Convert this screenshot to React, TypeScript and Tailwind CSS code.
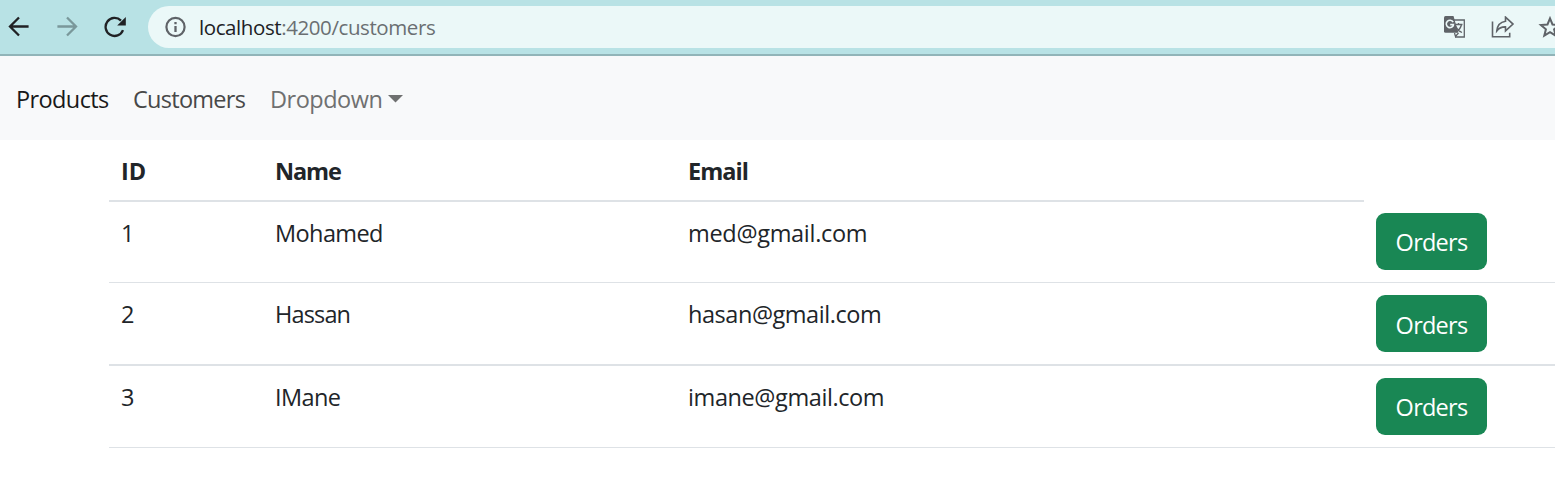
import React from "react";

type Customer = {
  id: number;
  name: string;
  email: string;
  row: string;
  cell: string;
  button: string;
  nameClass: string;
  emailClass: string;
};

const customers: Customer[] = [
  { id: 1, name: "Mohamed", email: "med@gmail.com", row: "h-[81px] border-b", cell: "pt-[11px]", button: "pt-px", nameClass: "tracking-[-0.6px]", emailClass: "tracking-[-0.3px]" },
  { id: 2, name: "Hassan", email: "hasan@gmail.com", row: "h-[83px] border-b-2", cell: "pt-3", button: "pt-[3px]", nameClass: "tracking-[-0.85px]", emailClass: "tracking-[-0.45px]" },
  { id: 3, name: "IMane", email: "imane@gmail.com", row: "h-[82px] border-b", cell: "pt-3", button: "pt-px", nameClass: "tracking-[-0.6px]", emailClass: "tracking-[-0.4px]" },
];

function BrowserBar() {
  return (
    <header className="flex h-14 items-start border-b-2 border-[#91b4b8] bg-[#b8e2e5] pt-1.5">
      <div className="flex h-[42px] w-[148px] shrink-0 items-center">
        <svg className="ml-2 h-[22px] w-[22px]" viewBox="0 0 22 22" fill="none" stroke="#202124" strokeWidth="2.3">
          <path d="M20.6 10.5H2.6M11 1.5l-9 9 9 9" />
        </svg>
        <svg className="ml-[26px] h-[22px] w-[22px]" viewBox="0 0 22 22" fill="none" stroke="#7a989b" strokeWidth="2.3">
          <path d="M1.4 10.5h18M11 1.5l9 9-9 9" />
        </svg>
        <svg className="ml-[26px] h-[22px] w-[22px]" viewBox="0 0 22 22" fill="none">
          <path d="M19 14.2A9 9 0 1 1 17 4.6" stroke="#202124" strokeWidth="2.3" />
          <path d="M21.8 1v8.6h-8.6z" fill="#202124" />
        </svg>
      </div>
      <div className="flex h-[42px] flex-1 items-center overflow-hidden rounded-l-full bg-[#ebf8f8]">
        <svg className="ml-[17px] h-[22px] w-[22px] shrink-0" viewBox="0 0 22 22" fill="none">
          <circle cx="10.5" cy="11" r="9.1" stroke="#5f6368" strokeWidth="2.2" />
          <path d="M10.5 10.1v6M10.5 6v2.2" stroke="#5f6368" strokeWidth="2.3" />
        </svg>
        <div className="ml-3 flex-1 whitespace-nowrap text-[20.5px] leading-[42px] tracking-[-0.41px] text-[#6a6f72]">
          <span className="text-[#202124]">localhost</span>:4200/customers
        </div>
        <svg className="mr-[25px] h-[22px] w-[22px] shrink-0" viewBox="0 0 22 22">
          <path d="M8 4h12.3v17H11" fill="none" stroke="#5f6368" strokeWidth="1.3" />
          <path d="M1.5 0h8l4.8 16.8H1.5Q0 16.8 0 15.3V1.5Q0 0 1.5 0z" fill="#5f6368" />
          <path d="M9.2 6.1A3.7 3.7 0 1 0 9.6 8.6H6.2" fill="none" stroke="#ebf8f8" strokeWidth="1.6" />
          <path d="M10.5 8.5h8M14.5 7v1.5M17.5 8.5q-1 5-5.5 7.5M12 10.5q1.5 4 6 6M10.5 17l1 3.5 3-3.5" fill="none" stroke="#5f6368" strokeWidth="1.3" />
        </svg>
        <svg className="mr-[23px] h-[22px] w-6 shrink-0" viewBox="0 0 24 22" fill="none" stroke="#5f6368" strokeWidth="1.6">
          <path d="M1.5 5.5v15.2h17.2v-4" />
          <path d="M14.5 1.2l7.5 6.9-7.5 6.8v-4q-5.5-.2-8.7 4Q6.5 6.4 14.5 5.2z" />
        </svg>
        <svg className="-mr-[5px] h-[22px] w-[22px] shrink-0" viewBox="0 0 22 22" fill="none" stroke="#5f6368" strokeWidth="2">
          <path d="M12 2.4l2.5 6.1 6.6.5-5 4.3 1.6 6.4-5.7-3.5-5.7 3.5 1.6-6.4-5-4.3 6.6-.5z" />
        </svg>
      </div>
    </header>
  );
}

function NavBar() {
  return (
    <nav className="flex h-[84px] items-center bg-[#f8f9fa] pl-4 pt-px text-[23.5px] leading-9">
      <a className="w-[117px] tracking-[-0.6px] text-[#191919]">Products</a>
      <a className="w-[137px] tracking-[-0.72px] text-[#474848]">Customers</a>
      <a className="flex items-center text-[#6f7070]">
        <span className="w-[118px] tracking-[-0.5px]">Dropdown</span>
        <svg className="h-2 w-[15px]" viewBox="0 0 15 8"><path d="M0 0h15L7.5 7.5z" fill="#6f7070" /></svg>
      </a>
    </nav>
  );
}

export default function App() {
  return (
    <div className="h-[481px] w-[1555px] overflow-hidden bg-white font-['Open_Sans','Noto_Sans',sans-serif] text-[#212529]">
      <BrowserBar />
      <NavBar />
      <main className="pl-[109px] text-[23.5px] leading-9">
        <div className="grid h-[62px] w-[1255px] grid-cols-[154px_413px_1fr] border-b-2 border-[#dee2e6] pt-[13px] font-bold">
          <div className="pl-3">ID</div>
          <div className="pl-3 tracking-[-1.1px]">Name</div>
          <div className="pl-3 tracking-[-0.95px]">Email</div>
        </div>
        {customers.map((c) => (
          <div key={c.id} className={`grid grid-cols-[154px_413px_688px_1fr] border-[#dee2e6] ${c.row}`}>
            <div className="pl-3 pt-[13px]">{c.id}</div>
            <div className="pl-3 pt-[13px]"><span className={c.nameClass}>{c.name}</span></div>
            <div className="pl-3 pt-[13px]"><span className={c.emailClass}>{c.email}</span></div>
            <div className={`pl-3 ${c.cell}`}>
              <button className={`flex h-[57px] w-[111px] items-center justify-center rounded-[9px] bg-[#198754] tracking-[-0.75px] text-white ${c.button}`}>Orders</button>
            </div>
          </div>
        ))}
      </main>
    </div>
  );
}
